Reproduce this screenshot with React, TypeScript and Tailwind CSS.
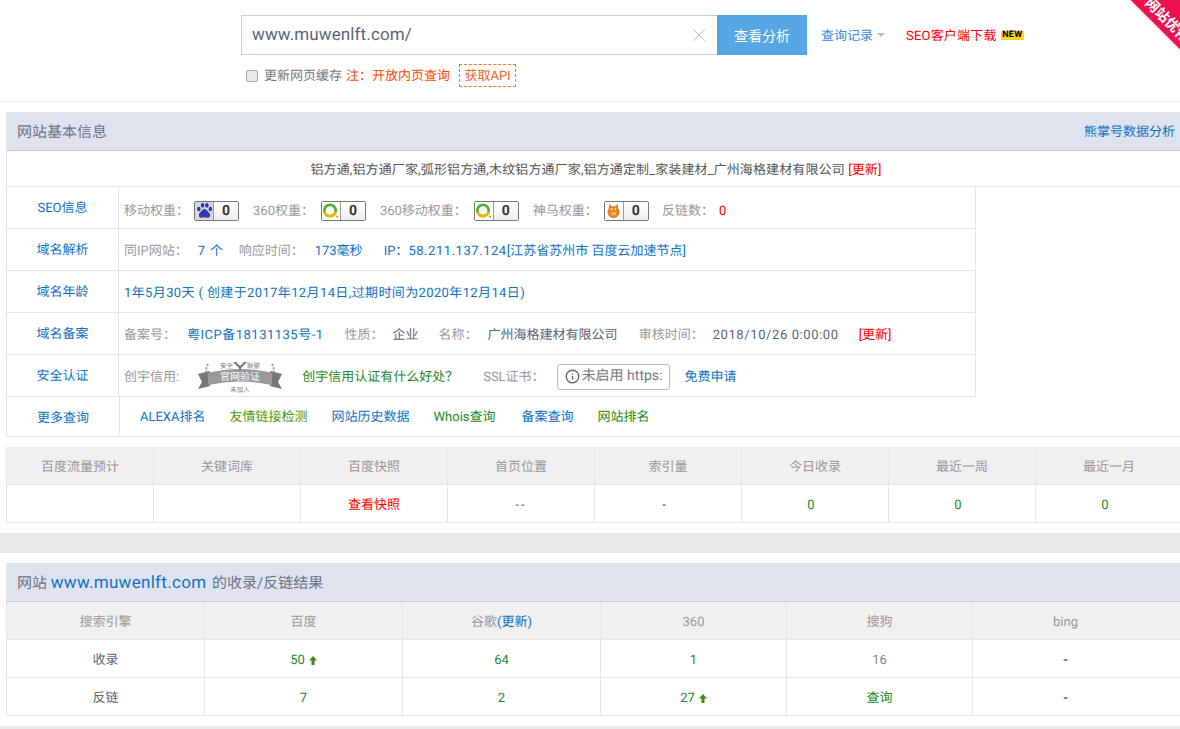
import { X, Info } from "lucide-react";

const FONT = "font-['Roboto','Noto_Sans_CJK_SC',sans-serif] [text-rendering:geometricPrecision] [text-spacing-trim:space-all]";

const BaiduIcon = () => (
  <svg viewBox="0 0 18 18" className="w-[17px] h-[17px]">
    <g fill="#2f3bb5">
      <ellipse cx="3" cy="7.500" rx="1.900" ry="2.400" />
      <ellipse cx="7" cy="3.500" rx="1.900" ry="2.500" />
      <ellipse cx="11.500" cy="3.500" rx="1.900" ry="2.500" />
      <ellipse cx="15.200" cy="7.500" rx="1.900" ry="2.400" />
      <path d="M9 7.500c2 0 2.800 1.800 4 3 1.300 1.200 2.300 2.200 2 4-.3 1.800-2 2.500-3.400 2.200-1-.2-1.800-.5-2.600-.5s-1.700.3-2.600.5C5 17 3.300 16.300 3 14.500c-.3-1.800.7-2.800 2-4 1.200-1.200 2-3 4-3z" />
    </g>
  </svg>
);

const Ring = () => (
  <svg viewBox="0 0 18 18" className="w-[17px] h-[17px]">
    <circle cx="8.500" cy="9" r="6" fill="none" stroke="#4fb233" strokeWidth="2.800" />
    <path d="M2.800 10.800A6 6 0 0 0 14.300 10.500" fill="none" stroke="#f7b500" strokeWidth="2.800" />
    <circle cx="16" cy="15.500" r="1.100" fill="#f08a00" />
  </svg>
);

const ShenmaIcon = () => (
  <svg viewBox="0 0 18 18" className="w-[17px] h-[17px]">
    <path d="M4.500 1.500l2.500 3h4l2.500-3 .5 5c1.500 2 1.800 4.500 1 6.500-.8 2.500-3.500 4-6 4s-5.200-1.500-6-4c-.8-2-.5-4.500 1-6.500z" fill="#e8821e" />
    <circle cx="7" cy="7.500" r="1" fill="#fff" />
    <circle cx="11" cy="7.500" r="1" fill="#fff" />
    <path d="M6.500 10.500h5v3.500h-5z" fill="#f7b267" />
  </svg>
);

const RankBadge = ({ icon, tint }: { icon: React.ReactNode; tint?: boolean }) => (
  <span className="inline-flex h-[20px] w-[45px] rounded-[2px] border border-[#777] overflow-hidden align-middle">
    <span className={`w-[19px] flex items-center justify-center border-r border-[#999] ${tint ? "bg-[#d9d9d9]" : "bg-white"}`}>
      {icon}
    </span>
    <span className="flex-1 flex items-center justify-center bg-gradient-to-b from-white to-[#eee] text-[14px] font-bold text-[#333] leading-none">
      0
    </span>
  </span>
);

const TrustBadge = () => (
  <svg viewBox="0 0 84 32" className="w-[84px] h-[32px]">
    <path d="M10 3c-3 5-2 9 1 13M74 3c3 5 2 9-1 13" fill="none" stroke="#999" strokeWidth="2" strokeDasharray="2 1.500" />
    <path d="M0 13l12-3v15l-12 3 4-7z" fill="#777" />
    <path d="M84 13l-12-3v15l12 3-4-7z" fill="#777" />
    <path d="M10 12q32-8 64 0v12q-32-7-64 0z" fill="#999" />
    <path d="M38 1l4 4 4-4h3l-6 6v2h-2v-2l-6-6z" fill="#777" />
    <text x="22" y="7" fontSize="6.500" fill="#777" fontFamily="Noto Sans CJK SC">安全</text>
    <text x="49" y="7" fontSize="6.500" fill="#777" fontFamily="Noto Sans CJK SC">联盟</text>
    <text x="42" y="19" fontSize="10" fill="#fff" textAnchor="middle" fontFamily="Noto Sans CJK SC">官网验证</text>
    <text x="42" y="31" fontSize="6.500" fill="#777" textAnchor="middle" fontFamily="Noto Sans CJK SC">未加入</text>
  </svg>
);

const InfoRow = ({ label, className = "pt-[4px]", children }: { label: string; className?: string; children: React.ReactNode }) => (
  <div className="flex h-[42px] border-b border-[#e6e6e6]">
    <div className="w-[112px] shrink-0 pt-[2px] flex items-center justify-center text-[#0f72c4] border-r border-[#e6e6e6]">
      {label}
    </div>
    <div className={`flex-1 flex items-center pl-[5px] ${className}`}>{children}</div>
  </div>
);

const Up = () => (
  <svg viewBox="0 0 8 9" className="inline-block w-[8px] h-[9px] ml-[4px] align-[-1px]">
    <path d="M4 0l4 4.500H5.500V9h-3V4.500H0z" fill="#3c8a12" />
  </svg>
);

const trafficHead = ["百度流量预计", "关键词库", "百度快照", "首页位置", "索引量", "今日收录", "最近一周", "最近一月"];
const engineCols = ["w-[198px]", "w-[198px]", "w-[198px]", "w-[186px]", "w-[186px]", "w-[212px] pr-[26px]"];

export default function App() {
  return (
    <div className={`relative w-[1180px] h-[729px] overflow-hidden bg-white text-[13px] text-[#999] ${FONT}`}>
      {/* corner ribbon */}
      <div className="absolute top-[-20px] left-[1079px] w-[160px] h-[40px] rotate-45 bg-[#ee1150] text-white text-[14px] font-bold leading-[22px] flex items-end justify-center pl-[40px] whitespace-nowrap z-10 shadow-sm">
        网站优化
      </div>

      {/* search header */}
      <div className="h-[102px] border-b border-[#f0f0f0] pl-[241px] pt-[15px]">
        <div className="flex items-center">
          <div className="w-[476px] h-[40px] border border-[#c5cee0] border-r-0 flex items-center justify-between pl-[10px] pr-[7px] text-[17px] text-[#5a6478]">
            <span className="pt-[2px] tracking-[0.12px]">www.muwenlft.com/</span>
            <X className="w-[22px] h-[22px] text-[#bbb]" strokeWidth={1} />
          </div>
          <button className="w-[90px] h-[40px] pt-[2px] bg-[#57a6e4] text-white text-[14px]">查看分析</button>
          <span className="ml-[14px] pt-[3px] text-[#3c8ce0]">查询记录</span>
          <span className="ml-[4px] w-0 h-0 border-x-[4px] border-x-transparent border-t-[4px] border-t-[#bbb]" />
          <span className="ml-[21px] pt-[3px] tracking-[0.2px] text-[#f00]">SEO客户端下载</span>
          <span className="ml-[4px] bg-[#ffd21e] text-black text-[9px] font-bold leading-[9px] h-[9px] px-[1.500px] tracking-[0.3px]">NEW</span>
        </div>
        <div className="flex items-center mt-[9px] ml-[5px]">
          <input type="checkbox" readOnly className="w-[12px] h-[12px] appearance-none rounded-[2px] border border-[#aaa] bg-[#e8e8e8]" />
          <span className="ml-[6px] pt-[2px] text-[#777]">更新网页缓存</span>
          <span className="ml-[4px] pt-[2px] text-[#fa4a00]">注：开放内页查询</span>
          <span className="ml-[9px] h-[23px] w-[57px] pt-[2px] flex items-center justify-center whitespace-nowrap border border-dashed border-[#f57a1c] text-[#e8642a]">获取API</span>
        </div>
      </div>

      {/* basic info */}
      <div className="ml-[6px] mt-[10px] w-[1180px]">
        <div className="h-[39px] bg-[#dfe3ee] border-b border-[#c5cee0] flex items-center justify-between pl-[11px] pr-[11px] pt-[3px] text-[15px] text-[#6b7488]">
          <span>网站基本信息</span>
          <span className="text-[13px] text-[#0f72c4]">熊掌号数据分析</span>
        </div>
        <div className="h-[36px] border-b border-l border-[#e6e6e6] flex items-center justify-center pr-[1px] pt-[4px] text-[#555]">
          <span className="tracking-[0.12px]">铝方通,铝方通厂家,弧形铝方通,木纹铝方通厂家,铝方通定制_家装建材_广州海格建材有限公司 <span className="text-[#f00]">[更新]</span></span>
        </div>
        <div className="w-[970px] border-l border-r border-[#e6e6e6]">
          <InfoRow label="SEO信息" className="pt-[8px]">
            <span>移动权重：</span>
            <span className="ml-[5px] -mt-[2px]"><RankBadge icon={<BaiduIcon />} tint /></span>
            <span className="ml-[14px]">360权重：</span>
            <span className="ml-[7px] -mt-[2px]"><RankBadge icon={<Ring />} /></span>
            <span className="ml-[14px]">360移动权重：</span>
            <span className="ml-[7px] -mt-[2px]"><RankBadge icon={<Ring />} /></span>
            <span className="ml-[14px]">神马权重：</span>
            <span className="ml-[6px] -mt-[2px]"><RankBadge icon={<ShenmaIcon />} /></span>
            <span className="ml-[13px]">反链数：</span>
            <span className="ml-[5px] text-[#f00]">0</span>
          </InfoRow>
          <InfoRow label="域名解析">
            <span>同IP网站：</span>
            <span className="ml-[10px] tracking-[0.8px] text-[#0f72c4]">7 个</span>
            <span className="ml-[15px]">响应时间：</span>
            <span className="ml-[11px] text-[#0f72c4]">173毫秒</span>
            <span className="ml-[21px] text-[#0f72c4]">IP：<span className="tracking-[0.55px]">58.211.137.124</span>[江苏省苏州市 百度云加速节点]</span>
          </InfoRow>
          <InfoRow label="域名年龄">
            <span className="tracking-[0.38px] text-[#0f72c4]">1年5月30天 ( 创建于2017年12月14日,过期时间为2020年12月14日)</span>
          </InfoRow>
          <InfoRow label="域名备案">
            <span>备案号：</span>
            <span className="ml-[11px] tracking-[0.5px] text-[#0f72c4]">粤ICP备18131135号-1</span>
            <span className="ml-[21px]">性质：</span>
            <span className="ml-[9px] text-[#5a6478]">企业</span>
            <span className="ml-[20px]">名称：</span>
            <span className="ml-[10px] text-[#5a6478]">广州海格建材有限公司</span>
            <span className="ml-[21px]">审核时间：</span>
            <span className="ml-[9px] tracking-[0.6px] text-[#5a6478]">2018/10/26 0:00:00</span>
            <span className="ml-[20px] text-[#f00]">[更新]</span>
          </InfoRow>
          <InfoRow label="安全认证">
            <span>创宇信用:</span>
            <span className="ml-[19px] -mt-[2px]"><TrustBadge /></span>
            <span className="ml-[20px] text-[#1e8a1e]">创宇信用认证有什么好处？</span>
            <span className="ml-[25px]">SSL证书：</span>
            <span className="ml-[12px] -mt-[2px] h-[26px] px-[7px] flex items-center gap-[2px] border border-[#bbb] rounded-[3px] text-[14px] text-[#777]">
              <Info className="w-[15px] h-[15px] text-[#666]" strokeWidth={2.200} />
              未启用 https:
            </span>
            <span className="ml-[14px] text-[#0f72c4]">免费申请</span>
          </InfoRow>
        </div>
        <div className="flex h-[40px] border-b border-l border-[#e6e6e6]">
          <div className="w-[113px] shrink-0 flex items-center justify-center text-[#0f72c4] border-r border-[#e6e6e6] mb-[1px] pt-[5px]">
            更多查询
          </div>
          <div className="flex-1 flex items-center pl-[20px] pt-[2px] gap-[24px]">
            <span className="text-[#0f72c4]">ALEXA排名</span>
            <span className="text-[#4c9a10]">友情链接检测</span>
            <span className="text-[#0f72c4]">网站历史数据</span>
            <span className="mr-[2px] text-[#1e8a1e]">Whois查询</span>
            <span className="text-[#0f72c4]">备案查询</span>
            <span className="text-[#1e8a1e]">网站排名</span>
          </div>
        </div>
      </div>

      {/* traffic table */}
      <div className="ml-[6px] mt-[10px] w-[1176px] grid grid-cols-[repeat(8,147px)] border-l border-[#e6e6e6]">
        {trafficHead.map((h) => (
          <div key={h} className="h-[38px] pt-[4px] flex items-center justify-center bg-[#f0f0f0] border-r border-b border-[#e6e6e6]">{h}</div>
        ))}
        <div className="h-[38px] border-r border-b border-[#e6e6e6]" />
        <div className="h-[38px] border-r border-b border-[#e6e6e6]" />
        <div className="h-[38px] pt-[4px] flex items-center justify-center border-r border-b border-[#e6e6e6] text-[#f00]">查看快照</div>
        <div className="h-[38px] pt-[4px] flex items-center justify-center tracking-[2px] border-r border-b border-[#e6e6e6] text-[#555]">--</div>
        <div className="h-[38px] pt-[4px] flex items-center justify-center pr-[8px] border-r border-b border-[#e6e6e6] text-[#333]">-</div>
        <div className="h-[38px] pt-[4px] flex items-center justify-center pr-[8px] border-r border-b border-[#e6e6e6] text-[#1e8a1e]">0</div>
        <div className="h-[38px] pt-[4px] flex items-center justify-center pr-[8px] border-r border-b border-[#e6e6e6] text-[#1e8a1e]">0</div>
        <div className="h-[38px] pt-[4px] flex items-center justify-center pr-[8px] border-r border-b border-[#e6e6e6] text-[#1e8a1e]">0</div>
      </div>

      <div className="h-[20px] mt-[10px] bg-[#e8e8e8]" />

      {/* index result */}
      <div className="ml-[6px] mt-[10px] w-[1180px]">
        <div className="h-[39px] pt-[3px] bg-[#dfe3ee] border-b border-[#c5cee0] flex items-center pl-[11px] text-[15px] text-[#6b7488]">
          网站&nbsp;<span className="mr-[2px] text-[17px] tracking-[0.3px] text-[#0f72c4]">www.muwenlft.com</span>&nbsp;的收录/反链结果
        </div>
        <div className="flex border-l border-[#e6e6e6]">
          {["搜索引擎", "百度", "谷歌", "360", "搜狗", "bing"].map((h, i) => (
            <div key={h} className={`${engineCols[i]} h-[38px] pt-[4px] flex items-center justify-center bg-[#f0f0f0] border-r border-b border-[#e6e6e6]`}>
              {h}
              {i === 2 && <span className="text-[#0f72c4]">(更新)</span>}
            </div>
          ))}
        </div>
        <div className="flex border-l border-[#e6e6e6]">
          {[
            <span className="text-[#5a6478]">收录</span>,
            <span className="text-[#1e8a1e]">50<Up /></span>,
            <span className="text-[#1e8a1e]">64</span>,
            <span className="text-[#1e8a1e]">1</span>,
            <span className="text-[#888]">16</span>,
            <span className="font-bold text-[#1e8a1e]">-</span>,
          ].map((c, i) => (
            <div key={i} className={`${engineCols[i]} h-[38px] pt-[4px] flex items-center justify-center border-r border-b border-[#e6e6e6]`}>{c}</div>
          ))}
        </div>
        <div className="flex border-l border-[#e6e6e6]">
          {[
            <span className="text-[#5a6478]">反链</span>,
            <span className="text-[#1e8a1e]">7</span>,
            <span className="text-[#1e8a1e]">2</span>,
            <span className="text-[#1e8a1e]">27<Up /></span>,
            <span className="text-[#1e8a1e]">查询</span>,
            <span className="font-bold text-[#1e8a1e]">-</span>,
          ].map((c, i) => (
            <div key={i} className={`${engineCols[i]} h-[38px] pt-[4px] flex items-center justify-center border-r border-b border-[#e6e6e6]`}>{c}</div>
          ))}
        </div>
      </div>

      <div className="h-[10px] mt-[10px] bg-[#e8e8e8]" />
    </div>
  );
}
